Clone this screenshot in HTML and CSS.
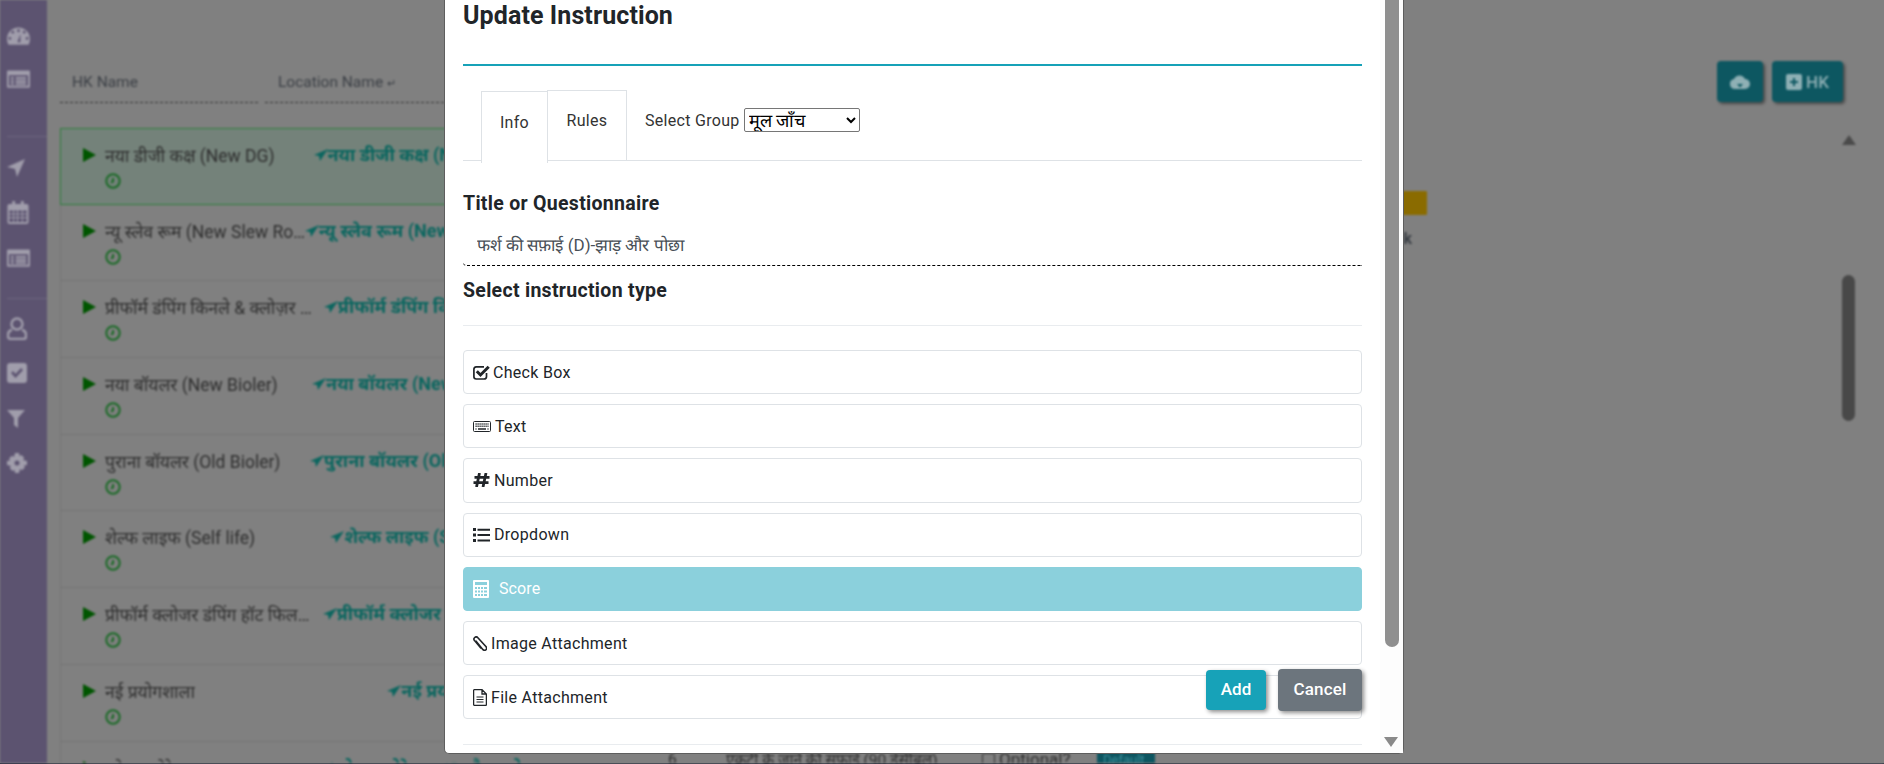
FILE: index.html
```html
<!DOCTYPE html>
<html lang="hi">
<head>
<meta charset="utf-8">
<title>Update Instruction</title>
<link rel="stylesheet" href="styles.css">
</head>
<body>
<div class="page">
  <div class="app">
    <nav class="sidebar">
      <svg class="nav-icon i-dash" viewBox="0 0 24 18"><path fill-rule="evenodd" d="M12 0C5 0 0 5.500 0 12c0 2.300.6 4.300 1.600 6h20.800c1-1.700 1.600-3.700 1.600-6C24 5.500 19 0 12 0zM6 3.500a1.500 1.500 0 1 1 0 3 1.500 1.500 0 0 1 0-3zm6-1.500a1.500 1.500 0 1 1 0 3 1.500 1.500 0 0 1 0-3zM3 10a1.500 1.500 0 1 1 0 3 1.500 1.500 0 0 1 0-3zm18 0a1.500 1.500 0 1 1 0 3 1.500 1.500 0 0 1 0-3zM18 3.500a1.500 1.500 0 1 1 0 3 1.500 1.500 0 0 1 0-3zM11 15l3-8 0 8a2 2 0 0 1-3 0z"/></svg>
      <svg class="nav-icon i-list" viewBox="0 0 24 18"><path fill-rule="evenodd" d="M1 0h22a1 1 0 0 1 1 1v16a1 1 0 0 1-1 1H1a1 1 0 0 1-1-1V1a1 1 0 0 1 1-1zm1 5v11h20V5zm2 2h3v2H4zm5 0h11v2H9zm-5 3h3v2H4zm5 0h11v2H9zm-5 3h3v2H4zm5 0h11v2H9z"/></svg>
      <hr class="nav-rule nav-rule-a">
      <svg class="nav-icon i-arrow" viewBox="0 0 18 18"><path d="M18 0L10 18 8 10 0 8z"/></svg>
      <svg class="nav-icon i-cal" viewBox="0 0 22 24"><path fill-rule="evenodd" d="M2 3h3V0h3v3h6V0h3v3h3a2 2 0 0 1 2 2v17a2 2 0 0 1-2 2H2a2 2 0 0 1-2-2V5a2 2 0 0 1 2-2zm0 7v3h4v-3zm5 0v3h3v-3zm4 0v3h4v-3zm5 0v3h4v-3zM2 14v3h4v-3zm5 0v3h3v-3zm4 0v3h4v-3zm5 0v3h4v-3zM2 18v4h4v-4zm5 0v4h3v-4zm4 0v4h4v-4zm5 0v4h4v-4z"/></svg>
      <svg class="nav-icon i-list" viewBox="0 0 24 18"><path fill-rule="evenodd" d="M1 0h22a1 1 0 0 1 1 1v16a1 1 0 0 1-1 1H1a1 1 0 0 1-1-1V1a1 1 0 0 1 1-1zm1 5v11h20V5zm2 2h3v2H4zm5 0h11v2H9zm-5 3h3v2H4zm5 0h11v2H9zm-5 3h3v2H4zm5 0h11v2H9z"/></svg>
      <hr class="nav-rule nav-rule-b">
      <svg class="nav-icon i-user" viewBox="0 0 20 23"><path fill="none" d="M10 1.500a5.500 5.500 0 0 1 0 11 5.500 5.500 0 0 1 0-11zM5 13c-2.500.5-4 2.500-4 5v1.500A2.500 2.500 0 0 0 3.500 22h13a2.500 2.500 0 0 0 2.500-2.500V18c0-2.500-1.500-4.500-4-5"/></svg>
      <svg class="nav-icon i-check" viewBox="0 0 20 20"><path fill-rule="evenodd" d="M3 0h14a3 3 0 0 1 3 3v14a3 3 0 0 1-3 3H3a3 3 0 0 1-3-3V3a3 3 0 0 1 3-3zm1 10l4.500 5L16 7l-2-2-5.500 6L6 8z"/></svg>
      <svg class="nav-icon i-filter" viewBox="0 0 18 18"><path d="M0 0h18l-7 8v10l-4-3V8z"/></svg>
      <svg class="nav-icon i-cog" viewBox="0 0 20 20"><path fill-rule="evenodd" d="M8 0h4l.5 3 2-.9L17.300 5l-1.300 2 4 1v4l-3 .5.900 2L15 17.300l-2-1.300-1 4H8l-.5-3-2 .9L2.700 15 4 13l-4-1V8l3-.5-.9-2L5 2.700 7 4zm2 7.500a2.500 2.500 0 1 0 0 5 2.500 2.500 0 0 0 0-5z"/></svg>
    </nav>

    <main class="main">
      <section class="hk-list">
        <div class="hk-head">
          <div class="hk-filter hk-filter-name"><span>HK Name</span></div>
          <div class="hk-filter hk-filter-loc"><span>Location Name <small class="enter">↵</small></span></div>
        </div>
        <div class="hk-row hk-row-active">
          <div class="hk-name"><i class="play"></i><span class="ellip">नया डीजी कक्ष (New DG)</span></div>
          <div class="hk-loc"><svg class="loc-arrow" viewBox="0 0 14 12"><path d="M14 0L0 6l5 1 1 5z"/></svg>नया डीजी कक्ष (New DG) Section</div>
          <svg class="clock" viewBox="0 0 16 16"><circle cx="8" cy="8" r="6.700"/><path d="M8 5v3.500l-2 1"/></svg>
        </div>
        <div class="hk-row">
          <div class="hk-name"><i class="play"></i><span class="ellip">न्यू स्लेव रूम (New Slew Room)</span></div>
          <div class="hk-loc"><svg class="loc-arrow" viewBox="0 0 14 12"><path d="M14 0L0 6l5 1 1 5z"/></svg>न्यू स्लेव रूम (New Slew Room) A-1</div>
          <svg class="clock" viewBox="0 0 16 16"><circle cx="8" cy="8" r="6.700"/><path d="M8 5v3.500l-2 1"/></svg>
        </div>
        <div class="hk-row">
          <div class="hk-name"><i class="play"></i><span class="ellip">प्रीफॉर्म डंपिंग किनले &amp; क्लोज़र लाइन</span></div>
          <div class="hk-loc"><svg class="loc-arrow" viewBox="0 0 14 12"><path d="M14 0L0 6l5 1 1 5z"/></svg>प्रीफॉर्म डंपिंग किनले &amp; क्लोज़र A</div>
          <svg class="clock" viewBox="0 0 16 16"><circle cx="8" cy="8" r="6.700"/><path d="M8 5v3.500l-2 1"/></svg>
        </div>
        <div class="hk-row">
          <div class="hk-name"><i class="play"></i><span class="ellip">नया बॉयलर (New Bioler)</span></div>
          <div class="hk-loc"><svg class="loc-arrow" viewBox="0 0 14 12"><path d="M14 0L0 6l5 1 1 5z"/></svg>नया बॉयलर (New Bioler) Section</div>
          <svg class="clock" viewBox="0 0 16 16"><circle cx="8" cy="8" r="6.700"/><path d="M8 5v3.500l-2 1"/></svg>
        </div>
        <div class="hk-row">
          <div class="hk-name"><i class="play"></i><span class="ellip">पुराना बॉयलर (Old Bioler)</span></div>
          <div class="hk-loc"><svg class="loc-arrow" viewBox="0 0 14 12"><path d="M14 0L0 6l5 1 1 5z"/></svg>पुराना बॉयलर (Old Bioler) Section</div>
          <svg class="clock" viewBox="0 0 16 16"><circle cx="8" cy="8" r="6.700"/><path d="M8 5v3.500l-2 1"/></svg>
        </div>
        <div class="hk-row">
          <div class="hk-name"><i class="play"></i><span class="ellip">शेल्फ लाइफ (Self life)</span></div>
          <div class="hk-loc"><svg class="loc-arrow" viewBox="0 0 14 12"><path d="M14 0L0 6l5 1 1 5z"/></svg>शेल्फ लाइफ (Self life) Room</div>
          <svg class="clock" viewBox="0 0 16 16"><circle cx="8" cy="8" r="6.700"/><path d="M8 5v3.500l-2 1"/></svg>
        </div>
        <div class="hk-row">
          <div class="hk-name"><i class="play"></i><span class="ellip">प्रीफॉर्म क्लोजर डंपिंग हॉट फिल लाइन</span></div>
          <div class="hk-loc"><svg class="loc-arrow" viewBox="0 0 14 12"><path d="M14 0L0 6l5 1 1 5z"/></svg>प्रीफॉर्म क्लोजर डंपिंग हॉट फिल A</div>
          <svg class="clock" viewBox="0 0 16 16"><circle cx="8" cy="8" r="6.700"/><path d="M8 5v3.500l-2 1"/></svg>
        </div>
        <div class="hk-row">
          <div class="hk-name"><i class="play"></i><span class="ellip">नई प्रयोगशाला</span></div>
          <div class="hk-loc"><svg class="loc-arrow" viewBox="0 0 14 12"><path d="M14 0L0 6l5 1 1 5z"/></svg>नई प्रयोगशाला</div>
          <svg class="clock" viewBox="0 0 16 16"><circle cx="8" cy="8" r="6.700"/><path d="M8 5v3.500l-2 1"/></svg>
        </div>
        <div class="hk-row">
          <div class="hk-name"><i class="play"></i><span class="ellip">कोल्ड स्टोरेज कक्ष</span></div>
          <div class="hk-loc"><svg class="loc-arrow" viewBox="0 0 14 12"><path d="M14 0L0 6l5 1 1 5z"/></svg>कोल्ड स्टोरेज कक्ष और प्रयोगशाला</div>
        </div>
      </section>

      <section class="detail">
        <div class="detail-tag"></div>
        <div class="detail-note">Task</div>
        <div class="detail-row">
          <span class="detail-num">6</span>
          <span class="detail-text">एकटी के जाने की सफ़ाई (90 डेसीबल)</span>
          <span class="detail-opt"><i class="detail-box"></i>Optional?</span>
          <span class="detail-default">Default</span>
        </div>
      </section>

      <section class="side">
        <div class="side-actions">
          <button class="btn-page btn-cloud" type="button"><svg class="cloud" viewBox="0 0 20 14"><path fill-rule="evenodd" d="M5 14a5 5 0 0 1-1-9.900A6 6 0 0 1 15 4a5 5 0 0 1 0 10zm5-8l0 3H7l3 3.500L13 9h-3z"/></svg></button>
          <button class="btn-page btn-hk" type="button"><svg class="plus" viewBox="0 0 16 16"><path fill-rule="evenodd" d="M2 0h12a2 2 0 0 1 2 2v12a2 2 0 0 1-2 2H2a2 2 0 0 1-2-2V2a2 2 0 0 1 2-2zm5 4v3H4v2h3v3h2V9h3V7H9V4z"/></svg>HK</button>
        </div>
        <div class="side-scroll">
          <i class="side-up"></i>
          <i class="side-thumb"></i>
        </div>
      </section>
    </main>
  </div>
  <div class="page-line"></div>
</div>

<div class="modal">
  <h2 class="modal-title">Update Instruction</h2>
  <div class="modal-rule"></div>
  <div class="tabs">
    <a class="tab tab-active">Info</a>
    <a class="tab tab-rules">Rules</a>
    <label class="group-label">Select Group
      <select class="group-select"><option>मूल जाँच</option></select>
    </label>
  </div>
  <h3 class="field-title field-title-q">Title or Questionnaire</h3>
  <input class="field-input" type="text" value="फर्श की सफ़ाई (D)-झाड़ और पोछा">
  <h3 class="field-title field-title-t">Select instruction type</h3>
  <hr class="soft-rule soft-rule-a">
  <ul class="types">
    <li class="type type-check">
      <svg class="ti ti-check" viewBox="0 0 17 15"><path fill="none" stroke="#212529" stroke-width="1.700" d="M13.500 8v3.500a2.500 2.500 0 0 1-2.500 2.500H3.300A2.500 2.500 0 0 1 .9 11.500V4.300a2.500 2.500 0 0 1 2.400-2.500H11"/><path fill="none" stroke="#212529" stroke-width="3" d="M3.800 6.300l3.700 3.700L15.700 1.800"/></svg>
      Check Box
    </li>
    <li class="type">
      <svg class="ti ti-keys" viewBox="0 0 18 11"><rect x=".5" y=".5" width="17" height="10" rx="1" fill="none" stroke="#212529"/><path stroke="#212529" stroke-width="1.500" stroke-dasharray="1.200 .8" d="M2.500 3h13M2.500 5.300h13"/><path stroke="#212529" stroke-width="1.500" d="M5 8h8M2.500 8h1M14.500 8h1"/></svg>
      Text
    </li>
    <li class="type">
      <svg class="ti ti-hash" viewBox="0 0 17 14"><path fill="none" stroke="#212529" stroke-width="2.800" d="M6.500 0L3.500 14M13 0L10 14M1.500 4.400h15M.5 9.600h15"/></svg>
      Number
    </li>
    <li class="type">
      <svg class="ti ti-list" viewBox="0 0 17 14"><path fill="#212529" d="M0 0h3v3H0zM0 5.500h3v3H0zM0 11h3v3H0zM4.500.7H17v2H4.500zM4.500 6H17v2H4.500zM4.500 11.500H17v2H4.500z"/></svg>
      Dropdown
    </li>
    <li class="type type-active">
      <svg class="ti ti-calc" viewBox="0 0 16 18"><path fill="#fff" fill-rule="evenodd" d="M1 0h14a1 1 0 0 1 1 1v16a1 1 0 0 1-1 1H1a1 1 0 0 1-1-1V1a1 1 0 0 1 1-1zm1 2v3h12V2zm0 5v2h2V7zm3 0v2h2V7zm3 0v2h2V7zm3 0v2h3V7zM2 10.500v2h2v-2zm3 0v2h2v-2zm3 0v2h2v-2zm3 0v2h3v-2zM2 14v2h2v-2zm3 0v2h2v-2zm3 0v2h2v-2zm3 0v2h3v-2z"/></svg>
      Score
    </li>
    <li class="type">
      <svg class="ti ti-clip" viewBox="0 0 13 14"><path fill="none" stroke="#212529" stroke-width="1.500" d="M2.500 4.500l6.600 8c1 1.100 2.300 1 3 .3.700-.7.800-1.900-.1-3L4.500 1.600C3.700.7 2.500.6 1.600 1.400.7 2.200.6 3.400 1.400 4.300l6 7.200"/></svg>
      Image Attachment
    </li>
    <li class="type">
      <svg class="ti ti-file" viewBox="0 0 14 17"><path fill="none" stroke="#212529" stroke-width="1.300" d="M9 .6H1.500a.9.900 0 0 0-.9.900v14a.9.900 0 0 0 .9.900h11a.9.900 0 0 0 .9-.9V5zM9 .6V5h4.400"/><path stroke="#212529" d="M3.500 8h7M3.500 10.500h7M3.500 13h7"/></svg>
      File Attachment
    </li>
  </ul>
  <hr class="soft-rule soft-rule-b">
  <button class="modal-btn modal-add" type="button">Add</button>
  <button class="modal-btn modal-cancel" type="button">Cancel</button>
  <div class="modal-scroll">
    <i class="modal-thumb"></i>
    <i class="modal-down"></i>
  </div>
</div>
</body>
</html>
```
FILE: styles.css
```css
* { box-sizing: border-box; }
html, body { margin: 0; height: 100%; }
body {
  font-family: Roboto, "Noto Sans", "Noto Sans Devanagari", "Lohit Devanagari", sans-serif;
  font-size: 16px;
  color: #212529;
  background: #808080;
  overflow: hidden;
}
.page { height: 764px; display: flex; flex-direction: column; }
.app {
  flex: 1;
  min-height: 0;
  display: flex;
  overflow: hidden;
  background: #808080;
  filter: blur(1px);
}
.page-line { height: 1px; background: #2f3542; }

/* sidebar */
.sidebar {
  width: 47px;
  flex: none;
  background: #5c5370;
  padding: 27px 0 0 7px;
  display: flex;
  flex-direction: column;
  align-items: flex-start;
}
.nav-icon { display: block; fill: #a09dab; stroke: #a09dab; stroke-width: 0; flex: none; }
.i-dash { width: 23px; height: 18px; }
.i-list { width: 23px; height: 18px; margin-top: 25px; }
.i-arrow { width: 18px; height: 18px; }
.i-cal { width: 22px; height: 23px; margin-top: 24px; }
.i-user { width: 20px; height: 23px; }
.i-check { width: 20px; height: 20px; margin-top: 23px; }
.i-filter { width: 18px; height: 18px; margin-top: 27px; }
.i-cog { width: 20px; height: 20px; margin-top: 25px; }
.i-user path { stroke-width: 2.400; }
.nav-rule { width: 40px; height: 1px; border: 0; background: #6e667f; margin: 0; }
.nav-rule-a { margin-top: 48px; margin-bottom: 22px; }
.nav-rule-b { margin-top: 31px; margin-bottom: 18px; }

/* main */
.main { flex: 1; min-width: 0; display: flex; }
.hk-list { width: 530px; flex: none; margin-left: 13px; }
.hk-head { display: flex; height: 128px; padding-top: 66px; }
.hk-filter {
  height: 37px;
  border-bottom: 1px dashed #333;
  color: #3c4046;
  font-size: 15.500px;
  padding: 7px 0 0;
}
.hk-filter-name { width: 198px; padding-left: 12px; margin-right: 7px; }
.hk-filter-loc { flex: 1; padding-left: 13px; }
.enter { font-size: 11px; }
.hk-row {
  position: relative;
  height: 76.700px;
  display: flex;
  border-left: 1px solid #767676;
  border-bottom: 1px solid #737373;
  padding: 13px 0 0 22px;
}
.hk-row-active { background: #74827a; border: 1px solid #2e7d3c; }
.hk-name { width: 217px; flex: none; display: flex; align-items: center; height: 26px; color: #2e2e2e; font-size: 17.500px; }
.play {
  flex: none;
  width: 0; height: 0;
  margin-right: 9px;
  border-left: 13px solid #005500;
  border-top: 7px solid transparent;
  border-bottom: 7px solid transparent;
}
.ellip { flex: none; white-space: nowrap; overflow: hidden; text-overflow: ellipsis; max-width: 208px; }
.hk-loc {
  flex: 1;
  min-width: 0;
  height: 26px;
  line-height: 26px;
  text-align: center;
  white-space: nowrap;
  font-size: 18px;
  font-weight: 700;
  color: #0b665f;
}
.loc-arrow { width: 14px; height: 12px; fill: #0b665f; }
.clock {
  position: absolute;
  left: 44px;
  top: 44px;
  width: 16px;
  height: 16px;
  fill: none;
  stroke: #1a6a26;
  stroke-width: 2;
}

/* detail panel behind modal */
.detail {
  width: 837px;
  flex: none;
  padding-top: 191px;
  display: flex;
  flex-direction: column;
  align-items: flex-end;
}
.detail-tag { flex: none; width: 60px; height: 24px; background: #8a6b00; border-radius: 1px; }
.detail-note { flex: none; margin-top: 14px; margin-right: 15px; font-weight: 700; color: #3a3f45; }
.detail-row {
  flex: none;
  align-self: stretch;
  margin-top: 499px;
  display: flex;
  align-items: center;
  height: 24px;
  color: #2d2d2d;
  font-size: 15.500px;
}
.detail-num { margin-left: 78px; width: 58px; }
.detail-text { width: 256px; white-space: nowrap; overflow: hidden; }
.detail-opt { display: flex; align-items: center; gap: 4px; width: 115px; font-size: 17px; }
.detail-box { width: 13px; height: 13px; border: 1px solid #333; border-radius: 2px; }
.detail-default { width: 58px; background: #0d5560; color: #3c8d99; padding: 2px 6px; font-size: 13px; }

/* right column */
.side { flex: 1; min-width: 0; position: relative; display: flex; flex-direction: column; align-items: flex-end; padding-right: 28px; }
.side-actions { display: flex; gap: 9px; padding: 61px 13px 0 0; }
.btn-page {
  height: 41px;
  border: 0;
  border-radius: 4px;
  background: #0d5761;
  box-shadow: 2px 2px 3px rgba(0,0,0,.45);
  color: #8fb0b5;
  font: 500 17px Roboto, sans-serif;
  display: flex;
  align-items: center;
  justify-content: center;
}
.btn-cloud { width: 46px; padding: 0; }
.btn-hk { width: 71px; padding: 0; gap: 4px; }
.cloud { width: 20px; height: 14px; fill: #8fb0b5; }
.plus { width: 16px; height: 16px; fill: #8fb0b5; }
.side-scroll { width: 15px; display: flex; flex-direction: column; align-items: center; padding-top: 33px; }
.side-up { width: 0; height: 0; border: 7.500px solid transparent; border-top: 0; border-bottom: 10px solid #4a4a4a; }
.side-thumb { width: 13px; height: 146px; margin-top: 130px; border-radius: 7px; background: #484848; }

/* modal */
.modal {
  position: absolute;
  left: 444px;
  top: 0;
  width: 960px;
  height: 754px;
  background: #fff;
  border: 1px solid #5e5e5e;
  border-top: 0;
  border-radius: 0 0 5px 5px;
  padding: 0 41px 0 18px;
}
.modal-title { margin: 0; height: 32px; font-size: 25px; line-height: 32px; font-weight: 700; letter-spacing: .1px; }
.modal-rule { height: 2px; margin-top: 32px; background: #17a2b8; }
.tabs { display: flex; align-items: flex-start; height: 71px; margin-top: 24px; padding-left: 18px; border-bottom: 1px solid #dee2e6; letter-spacing: .3px; }
.tab { height: 70px; padding-bottom: 10px; border: 1px solid #dee2e6; display: flex; align-items: center; justify-content: center; color: #333; }
.tab-active { width: 67px; height: 72px; margin-top: 1px; background: #fff; border-bottom: 0; }
.tab-rules { width: 80px; margin-left: -1px; border-bottom: 0; }
.group-label { margin: 18px 0 0 18px; display: flex; align-items: center; gap: 4px; color: #333; white-space: nowrap; }
.group-select { width: 116px; height: 24px; font-family: Roboto, sans-serif; font-size: 18px; color: #000; background: #fff; border: 1px solid #767676; border-radius: 2px; }
.field-title { margin: 0; font-size: 19.500px; font-weight: 700; line-height: 24px; letter-spacing: .3px; }
.field-title-q { margin-top: 31px; }
.field-input {
  display: block;
  width: 100%;
  height: 40px;
  margin-top: 10px;
  padding: 0 0 2px 14px;
  border: 0;
  border-bottom: 1px dashed #000;
  border-radius: 0 0 0 4px;
  font: 17px Roboto, sans-serif;
  color: #495057;
  outline: 0;
}
.field-title-t { margin-top: 13px; }
.soft-rule { border: 0; height: 1px; margin: 0; background: #e9ecef; }
.soft-rule-a { margin-top: 22px; }
.soft-rule-b { margin-top: 25px; }
.types { list-style: none; margin: 24px 0 0; padding: 0; display: flex; flex-direction: column; gap: 10px; }
.type {
  height: 44.200px;
  border: 1px solid #dee2e6;
  border-radius: 4px;
  padding-left: 9px;
  display: flex;
  align-items: center;
  gap: 4px;
  color: #212529;
  letter-spacing: .3px;
}
.type-check { gap: 3px; }
.type-active { background: #8bd0dc; border-color: #8bd0dc; color: #fff; gap: 10px; letter-spacing: .1px; }
.ti { flex: none; display: block; }
.ti-check { width: 17px; height: 15px; }
.ti-keys { width: 18px; height: 11px; }
.ti-hash { width: 17px; height: 14px; }
.ti-list { width: 17px; height: 14px; }
.ti-calc { width: 16px; height: 18px; }
.ti-clip { width: 14px; height: 15px; }
.ti-file { width: 14px; height: 17px; }
.modal-btn {
  position: absolute;
  border: 0;
  border-radius: 4px;
  color: #fff;
  font: 500 17px Roboto, sans-serif;
  box-shadow: 2px 2px 4px rgba(0,0,0,.45);
}
.modal-add { left: 761px; top: 670px; width: 60px; height: 40px; padding: 0 0 2px; background: #17a2b8; }
.modal-cancel { left: 833px; top: 669px; width: 84px; height: 42px; padding: 0 0 2px; background: #6c757d; letter-spacing: .2px; }
.modal-scroll { position: absolute; right: 0; top: 0; bottom: 0; width: 23px; background: #fdfdfd; }
.modal-thumb { position: absolute; left: 5px; top: 0; width: 14px; height: 647px; background: #8f8f8f; border-radius: 0 0 7px 7px; }
.modal-down { position: absolute; left: 4px; top: 737px; width: 0; height: 0; border: 7.500px solid transparent; border-bottom: 0; border-top: 10px solid #8a8a8a; }
```
